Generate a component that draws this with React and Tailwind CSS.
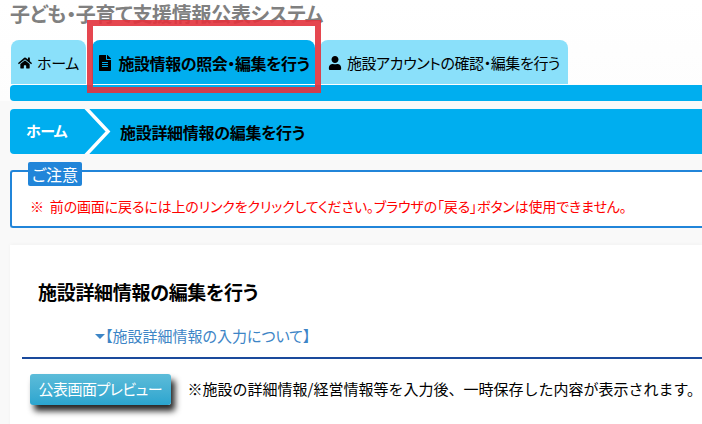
import React from 'react';
import { FaHome, FaFileAlt, FaUser } from 'react-icons/fa';

const jp = { fontFamily: '"Noto Sans CJK JP", "Liberation Sans", sans-serif' };

const App = () => {
  return (
    <div className="relative h-[424px] w-[702px] overflow-hidden bg-[#f9f9f9] text-black" style={jp}>
      <div className="bg-gradient-to-b from-white to-[#fdfdfd] pl-[10px] pt-[3px]">
        <h1 className="h-[37px] text-[20px] leading-[22px] font-bold tracking-[-0.3px] text-[#808080] [font-feature-settings:'palt']">
          子ども・子育て支援情報公表システム
        </h1>
        <div className="flex h-[44px] gap-[5px] pl-px">
          <div className="flex w-[75px] items-center justify-center gap-[5px] rounded-t-[8px] bg-[#8ae0fa] pt-[2px] text-[15px] tracking-[-0.4px] [font-feature-settings:'palt']">
            <FaHome className="text-[14px]" />
            <span>ホーム</span>
          </div>
          <div className="ml-px flex w-[223px] items-center justify-center gap-[5px] rounded-t-[8px] bg-[#00aeef] pt-[2px] text-[16px] font-bold tracking-[-0.4px] [font-feature-settings:'palt']">
            <FaFileAlt className="text-[16px]" />
            <span>施設情報の照会・編集を行う</span>
          </div>
          <div className="flex w-[248px] items-center justify-center gap-[5px] rounded-t-[8px] bg-[#8ae0fa] pt-[2px] text-[15px] tracking-[-0.4px] [font-feature-settings:'palt']">
            <FaUser className="text-[14px]" />
            <span>施設アカウントの確認・編集を行う</span>
          </div>
        </div>
        <div className="mt-px h-4 rounded-l-[4px] bg-[#00aeef]" />
      </div>

      <div className="pl-[10px] pt-2">
        <div className="relative flex h-[45px] items-center overflow-hidden rounded-l-[4px] bg-[#00aeef]">
          <span className="ml-4 text-[15px] font-bold tracking-[-0.6px] text-white [font-feature-settings:'palt']">ホーム</span>
          <svg className="absolute left-[72px] top-0 h-[45px] w-[40px]" viewBox="0 0 40 45" fill="none">
            <path d="M3 -2 L26 22.5 L3 47" stroke="#ffffff" strokeWidth="3.5" />
          </svg>
          <span className="absolute left-[110px] text-[16px] font-bold tracking-[-0.3px] [font-feature-settings:'palt']">施設詳細情報の編集を行う</span>
        </div>

        <div className="relative mt-4 h-[58px] rounded-l-[3px] border-2 border-r-0 border-[#2185d9] bg-white">
          <span className="absolute left-4 top-[-10px] flex h-6 w-[54px] items-center justify-center rounded-[2px] bg-[#2185d9] text-[16px] text-white [font-feature-settings:'palt']">
            ご注意
          </span>
          <p className="whitespace-nowrap pl-[18px] pt-[24px] text-[14px] leading-[20px] tracking-[-0.15px] text-[#ff0000] [font-feature-settings:'palt']">
            ※&nbsp;&nbsp;前の画面に戻るには上のリンクをクリックしてください。ブラウザの「戻る」ボタンは使用できません。
          </p>
        </div>

        <div className="mt-[17px] h-[200px] bg-white shadow-[0_-1px_4px_rgba(0,0,0,0.03)]">
          <h2 className="pl-7 pt-[35px] text-[19px] leading-[24px] font-bold tracking-[-0.3px] [font-feature-settings:'palt']">施設詳細情報の編集を行う</h2>
          <div className="flex items-center pl-[85px] pt-[22px] text-[15px] leading-[20px] text-[#3d85c6] [font-feature-settings:'palt']">
            <span className="mt-px h-0 w-0 border-x-[5px] border-t-[5px] border-x-transparent border-t-[#3d85c6]" />
            <span>【施設詳細情報の入力について】</span>
          </div>
          <div className="ml-3 mt-[11px] h-0.5 bg-[#1a4a9c]" />
          <div className="flex items-center pl-5 pt-[15px]">
            <button className="flex h-[31px] w-[141px] items-center justify-center rounded-[3px] bg-gradient-to-b from-[#5cbcd9] to-[#2aa5cf] text-[15px] tracking-[-0.5px] text-white shadow-[4px_6px_6px_rgba(0,0,0,0.85)] [font-feature-settings:'palt']">
              公表画面プレビュー
            </button>
            <p className="ml-[17px] whitespace-nowrap text-[15px]">
              ※施設の詳細情報/経営情報等を入力後、一時保存した内容が表示されます。
            </p>
          </div>
        </div>
      </div>

      <div className="absolute left-[87px] top-[20px] h-[73px] w-[234px] border-[6px] border-[#e2323c]/90" />
    </div>
  );
};

export default App;
